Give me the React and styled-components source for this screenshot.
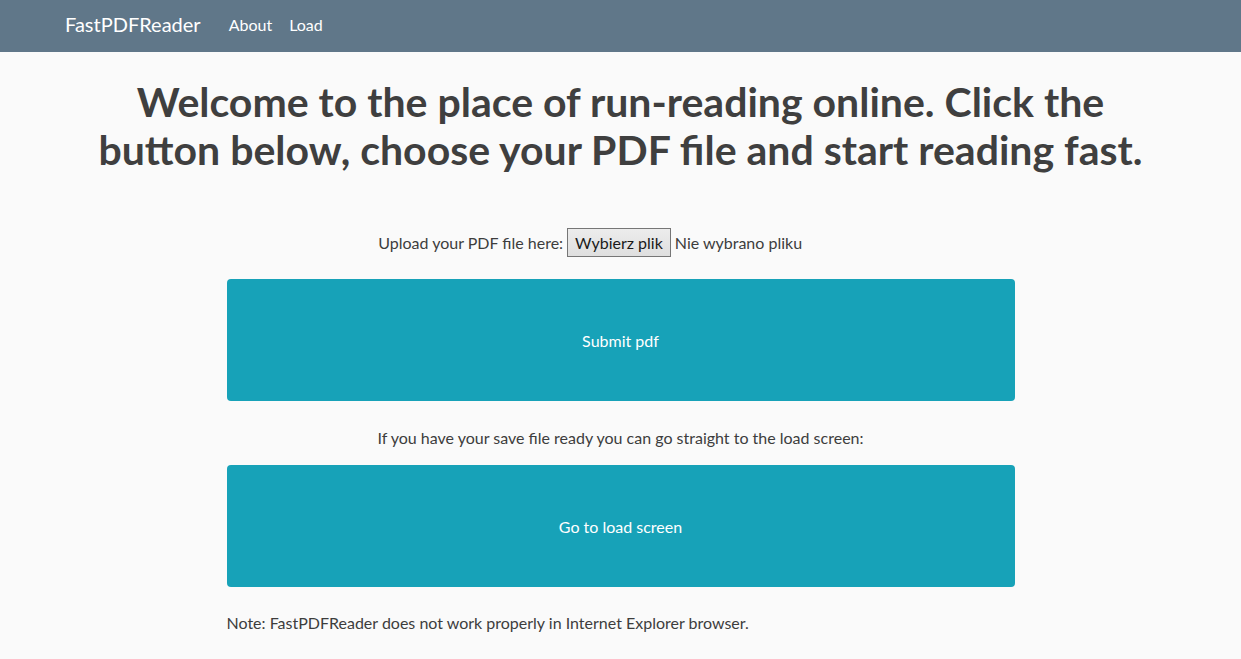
import styled, { createGlobalStyle } from "styled-components";

const GlobalStyle = createGlobalStyle`
  body {
    margin: 0;
    background-color: #fafafa;
    font-family: "Lato", "Open Sans", sans-serif;
    color: #3d3d3d;
  }
`;

const Navbar = styled.nav`
  height: 52px;
  box-sizing: border-box;
  padding: 0 0 4px 65px;
  background-color: #607789;
  display: flex;
  align-items: center;
`;

const Brand = styled.a`
  font-size: 20px;
  color: #fff;
  margin-right: 28px;
  text-decoration: none;
`;

const NavLink = styled.a`
  font-size: 16px;
  color: #fff;
  margin-right: 17px;
  text-decoration: none;
`;

const Title = styled.h1`
  margin: 26px auto 0;
  max-width: 1070px;
  text-align: center;
  font-size: 41px;
  font-weight: 700;
  line-height: 48px;
  color: #3f3f3f;
`;

const Content = styled.main`
  width: 788px;
  margin: 0 auto;
  display: flex;
  flex-direction: column;
`;

const Line = styled.p`
  margin: ${(p) => p.$top || 0}px 0 0;
  font-size: 16px;
  line-height: 24px;
  display: flex;
  align-items: center;
  justify-content: ${(p) => (p.$left ? "flex-start" : "center")};
`;

const FileButton = styled.span`
  display: inline-block;
  margin: 0 4px;
  padding: 2px 7px;
  border: 1px solid #767676;
  background: linear-gradient(#ececec, #dfdfdf);
  color: #1a1a1a;
  font-size: 16px;
  line-height: 23px;
`;

/* the native file input keeps a fixed width, so its label leaves empty room on the right */
const FileName = styled.span`
  width: 188px;
`;

const BigButton = styled.button`
  margin-top: ${(p) => p.$top}px;
  height: 122px;
  width: 100%;
  border: none;
  border-radius: 4px;
  background-color: #17a2b8;
  color: #fff;
  font-family: inherit;
  font-size: 16px;
  cursor: pointer;
`;

export default function App() {
  return (
    <>
      <GlobalStyle />
      <Navbar>
        <Brand href="#">FastPDFReader</Brand>
        <NavLink href="#">About</NavLink>
        <NavLink href="#">Load</NavLink>
      </Navbar>
      <Title>
        Welcome to the place of run-reading online. Click the button below,
        choose your PDF file and start reading fast.
      </Title>
      <Content>
        <Line $top={54}>
          Upload your PDF file here:
          <FileButton>Wybierz plik</FileButton>
          <FileName>Nie wybrano pliku</FileName>
        </Line>
        <BigButton $top={22}>Submit pdf</BigButton>
        <Line $top={25}>
          If you have your save file ready you can go straight to the load screen:
        </Line>
        <BigButton $top={15}>Go to load screen</BigButton>
        <Line $top={24} $left>
          Note: FastPDFReader does not work properly in Internet Explorer browser.
        </Line>
      </Content>
    </>
  );
}
